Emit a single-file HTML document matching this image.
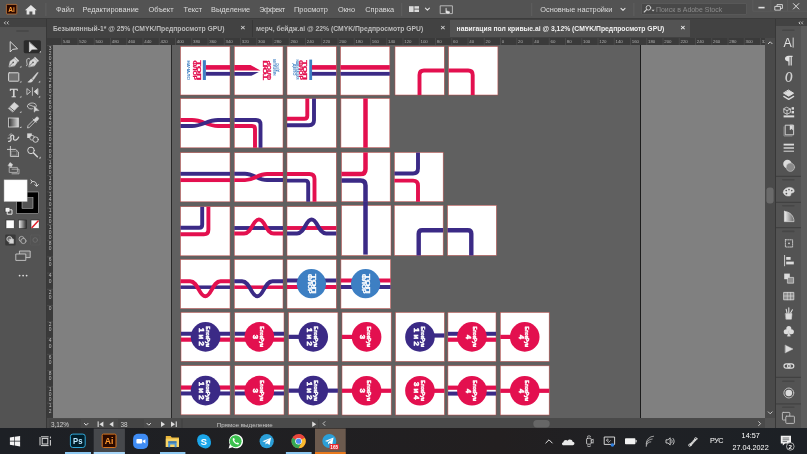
<!DOCTYPE html>
<html lang="ru">
<head>
<meta charset="utf-8">
<title>Adobe Illustrator</title>
<style>
*{box-sizing:border-box;margin:0;padding:0}
html,body{width:807px;height:454px;overflow:hidden;background:#535353;font-family:"Liberation Sans",sans-serif;}
#app{will-change:transform;position:relative;width:807px;height:454px;overflow:hidden;background:#535353}
.abs{position:absolute}
/* menu bar */
#menubar{left:0;top:0;width:807px;height:19px;background:#535353;border-bottom:1px solid #3c3c3c}
#menubar .mi{position:absolute;top:4.6px;font-size:7.4px;line-height:9px;color:#dcdcdc;white-space:nowrap}
/* tab bar */
#tabbar{left:47px;top:19px;width:728px;height:19px;background:#424242}
.tab{position:absolute;top:1px;height:17px;font-size:6.78px;font-weight:bold;line-height:17px;color:#bcbcbc;white-space:nowrap}
.tab.active{background:#535353;color:#f2f2f2}
.tabx{position:absolute;top:1px;font-size:8px;line-height:15px;color:#cfcfcf;font-weight:bold}
/* tools */
#tools{left:0;top:19px;width:46px;height:410px;background:#535353}
#toolshead{left:0;top:19px;width:46px;height:8px;background:#424242}
/* canvas */
#hruler{left:53px;top:38px;width:712px;height:7px;background:#3a3a3a}
#vruler{left:47px;top:38px;width:6px;height:380px;background:#3a3a3a}
#canvas{left:53px;top:45px;width:712px;height:373px;background:#606060;overflow:hidden}
/* right */
#vscroll{left:765px;top:38px;width:10px;height:380px;background:#4a4a4a}
#rpanel{left:776px;top:19px;width:25px;height:410px;background:#535353}
#rstrip{left:801px;top:26px;width:6px;height:403px;background:#5c5c5c}
#status{left:47px;top:418px;width:728px;height:11px;background:#4a4a4a}
#status span{position:absolute;top:2.9px;font-size:6.4px;line-height:7px;color:#d0d0d0;white-space:nowrap}
/* taskbar */
#taskbar{left:0;top:429px;width:807px;height:25px;background:#1e2126}
#taskbar .tt{position:absolute;color:#fff;white-space:nowrap}
svg{position:absolute;left:0;top:0;overflow:visible}
svg text{font-family:"Liberation Sans",sans-serif}
</style>
</head>
<body>
<div id="app">

<!-- ================= MENU BAR ================= -->
<div id="menubar" class="abs">
  <span class="mi" style="left:56px">Файл</span>
  <span class="mi" style="left:82.6px">Редактирование</span>
  <span class="mi" style="left:148.4px">Объект</span>
  <span class="mi" style="left:183.6px">Текст</span>
  <span class="mi" style="left:211px">Выделение</span>
  <span class="mi" style="left:259.3px;letter-spacing:-.5px">Эффект</span>
  <span class="mi" style="left:294px">Просмотр</span>
  <span class="mi" style="left:337.9px">Окно</span>
  <span class="mi" style="left:365.2px">Справка</span>
  <span class="mi" style="left:540.2px">Основные настройки</span>
  <div class="abs" style="left:640.5px;top:3px;width:106px;height:11.5px;background:#484848;border:1px solid #585858;border-radius:1px"></div>
  <span class="mi" style="left:656px;color:#8c8c8c;font-size:6.95px">Поиск в Adobe Stock</span>
</div>

<!-- ================= TAB BAR ================= -->
<div id="tabbar" class="abs">
  <div class="tab" style="left:5.9px">Безымянный-1* @ 25% (CMYK/Предпросмотр GPU)</div>
  <div class="tabx" style="left:193.5px">×</div>
  <div class="tab" style="left:209px">мерч, бейдж.ai @ 22% (CMYK/Предпросмотр GPU)</div>
  <div class="tabx" style="left:393.5px">×</div>
  <div class="abs tabsep" style="left:204.6px;top:1px;width:1px;height:17px;background:#383838"></div>
  <div class="tab active" style="left:403px;width:240px;padding-left:6.6px">навигация пол кривые.ai @ 3,12% (CMYK/Предпросмотр GPU)</div>
  <div class="tabx" style="left:633.5px;color:#f0f0f0">×</div>
</div>

<!-- ================= TOOLS ================= -->
<div id="tools" class="abs"></div>
<div id="toolshead" class="abs"></div>
<div class="abs" style="left:0;top:19px;width:46px;height:410px"><svg width="46" height="435" viewBox="0 19 46 435">
  <!-- header chevrons -->
  <path d="M5.8 21.4 L4.3 22.9 L5.8 24.4 M8.6 21.4 L7.1 22.9 L8.6 24.4" stroke="#d4d4d4" stroke-width=".9" fill="none"/>
  <!-- grip -->
  <rect x="16" y="30.2" width="13" height="1.6" rx=".8" fill="#474747"/>
  <g fill="none" stroke="#d6d6d6" stroke-width="1" stroke-linejoin="round" stroke-linecap="round">
    <!-- selection tool (outline) -->
    <path d="M10.2 42 L10.2 52 L12.6 49.4 L17.2 48.8 Z" />
    <!-- active bg + direct selection -->
    <rect x="23.7" y="40.2" width="17.2" height="13" rx="1.6" fill="#2b2b2b" stroke="none"/>
    <path d="M29.4 42.4 L29.4 52 L32 49.2 L36.9 49.2 Z" fill="#e2e2e2" stroke="#e2e2e2" stroke-width=".6"/>
    <!-- pen -->
    <path d="M9 66.6 L10.2 61.2 L14.2 58.6 L17.4 61.8 L14.8 65.6 Z" fill="#d6d6d6" stroke-width=".6"/>
    <path d="M14.6 57.4 L18.6 61.4" stroke-width="1.6" stroke-linecap="butt"/>
    <path d="M9.4 66.2 L12.8 62.8" stroke="#535353" stroke-width=".7"/>
    <circle cx="13.2" cy="62.4" r=".8" fill="#535353" stroke="none"/>
    <!-- curvature pen -->
    <path d="M28.8 66.6 L30 61.2 L34 58.6 L37.2 61.8 L34.6 65.6 Z" fill="#d6d6d6" stroke-width=".6"/>
    <path d="M34.4 57.4 L38.4 61.4" stroke-width="1.6" stroke-linecap="butt"/>
    <path d="M29.2 66.2 L32.6 62.8" stroke="#535353" stroke-width=".7"/>
    <circle cx="33" cy="62.4" r=".8" fill="#535353" stroke="none"/>
    <path d="M26.4 65.8 C28.6 65.2 25.8 61.6 27 59.4 C27.6 58.4 28.8 58 29.6 58.8" stroke-width=".9"/>
    <!-- rectangle -->
    <rect x="8.6" y="72.8" width="10.2" height="8.4" rx=".6" fill="#6f6f6f"/>
    <!-- brush -->
    <path d="M37.4 72.4 L32.2 78.4 L33.6 79.6 L38 73 Z" fill="#d6d6d6" stroke-width=".5"/>
    <path d="M31.6 79 C29.6 79 30 81.4 27.8 82 C30.4 82.8 33 81.6 33 80.2 Z" fill="#d6d6d6" stroke-width=".5"/>
    <!-- reflect -->
    <path d="M32.4 87.6 V95.4" stroke-width=".8"/>
    <path d="M27.2 88.8 L30.6 91.6 L27.2 94.4 Z" stroke-width=".8"/>
    <path d="M37.6 88.8 L34.2 91.6 L37.6 94.4 Z" fill="#d6d6d6" stroke-width=".8"/>
    <!-- eraser -->
    <path d="M8.6 108.2 L14.2 102.4 L18.6 106 L13 111.8 Z" fill="#d6d6d6" stroke-width=".6"/>
    <path d="M9.6 107.2 L14 110.8" stroke="#535353" stroke-width=".9"/>
    <!-- shape builder (lasso-ish) -->
    <path d="M27.4 106.4 C27 102.8 34 101.8 36 104.6 C36.8 106 36 107.4 34.6 107.8 M27.4 106.4 C27.8 108.8 31 109.4 32.4 108.8 M28.6 104.6 L33.4 106.4" stroke-width=".8"/>
    <path d="M34.2 106.2 L34.2 112.2 L35.8 110.6 L38.6 110.6 Z" fill="#d6d6d6" stroke-width=".5"/>
    <!-- eyedropper -->
    <path d="M27.6 127.6 L28 125.6 L33.4 120.2 L35 121.8 L29.6 127.2 Z" stroke-width=".8"/>
    <path d="M33 119 L36.2 122.2 M34 120 L36 117.6 C36.6 117 37.8 117 38.2 117.6 C38.8 118.2 38.6 119.2 38 119.8 L35.6 121.8" fill="#d6d6d6" stroke-width=".8"/>
    <!-- symbol sprayer / puppet -->
    <path d="M8.6 141.4 C10.8 141.6 11.6 139.4 10.8 137.6 C10 135.8 12.6 134 13.6 136 C14.4 137.6 12.8 138.4 13.8 139.6 C15 141 17.4 139.6 18.6 137.2" stroke-width="1.3"/>
    <path d="M9.4 135.2 L11 133.6 M8 138.2 L9.6 138" stroke-width=".8"/>
    <!-- blend -->
    <rect x="27.2" y="133.4" width="4.6" height="4.6" fill="#d6d6d6" stroke="none"/>
    <circle cx="32.2" cy="137.8" r="2.4" stroke-width=".8" fill="#535353"/>
    <circle cx="35.6" cy="139.6" r="2.7" stroke-width=".9" fill="#535353"/>
    <!-- artboard -->
    <path d="M10.4 146.4 V156.4 H18.4 M7.4 149.4 H15.6 L18.4 152 V156.4" stroke-width=".9"/>
    <path d="M11.6 151.2 H16.8 V155.2 H11.6 Z" stroke-width=".5" stroke="#a8a8a8"/>
    <!-- zoom -->
    <circle cx="31" cy="150.4" r="3.3" stroke-width="1"/>
    <path d="M33.6 153 L37.4 156.8" stroke-width="1.5"/>
    <!-- slice/hand-ish -->
    <path d="M9.6 167.4 H17.4 V172.4 H9.6 Z M12 169.2 H19 V173.8 H12" stroke-width=".8" stroke="#bdbdbd"/>
    <path d="M8.2 165.4 L10 162.6 L12.6 164.4 L11.4 167 Z" fill="#d6d6d6" stroke-width=".5"/>
    <!-- swap arrows -->
    <path d="M32 181.6 C35 181 36.8 182.6 36.6 185.6 M34.8 184.6 L36.6 186.4 L38.4 184.6 M31 183.2 L32.4 181.4 L30.8 180" stroke-width="1"/>
    <!-- default fill/stroke mini -->
    <rect x="5.4" y="207.6" width="4.4" height="4.4" fill="#fff" stroke="#2a2a2a" stroke-width=".5"/>
    <rect x="7.6" y="209.8" width="4.4" height="4.4" fill="none" stroke="#e8e8e8" stroke-width="1"/>
    <!-- screen mode -->
    <rect x="19.8" y="251" width="10.4" height="6.6" fill="#6a6a6a" stroke-width=".8"/>
    <rect x="16.2" y="254" width="9.6" height="6.4" fill="#535353" stroke-width=".8"/>
    <!-- draw modes -->
    <rect x="5.2" y="234.6" width="10.4" height="10.8" rx="1" fill="#3a3a3a" stroke="none"/>
    <circle cx="9.4" cy="239" r="2.6" fill="#6a6a6a" stroke-width=".8"/>
    <rect x="9.4" y="239.2" width="4.2" height="4.2" fill="#d6d6d6" stroke-width=".4"/>
    <circle cx="21.6" cy="239" r="2.6" stroke-width=".8" stroke="#bdbdbd"/>
    <circle cx="23.4" cy="241" r="2.6" stroke-width=".8" stroke="#bdbdbd" fill="#535353"/>
    <rect x="30.4" y="235" width="9.6" height="10" rx="1" stroke="#5d5d5d" stroke-width=".6"/>
    <circle cx="35.2" cy="240" r="2.3" stroke="#6e6e6e" stroke-width=".8"/>
  </g>
  <!-- tiny flyout triangles -->
  <g fill="#d6d6d6">
    <path d="M41 52.6 L41 50.8 L39.2 52.6 Z"/>
    <path d="M21.4 67.6 L21.4 65.8 L19.6 67.6 Z"/>
    <path d="M21.4 82.6 L21.4 80.8 L19.6 82.6 Z"/><path d="M40.2 82.6 L40.2 80.8 L38.4 82.6 Z"/>
    <path d="M21.4 97.6 L21.4 95.8 L19.6 97.6 Z"/><path d="M40.2 97.6 L40.2 95.8 L38.4 97.6 Z"/>
    <path d="M21.4 112.8 L21.4 111 L19.6 112.8 Z"/>
    <path d="M21.4 128 L21.4 126.2 L19.6 128 Z"/>
    <path d="M40.6 158.4 L40.6 156.6 L38.8 158.4 Z"/>
  </g>
  <!-- Type tool glyph -->
  <text x="13.7" y="96.8" style="font-family:'Liberation Serif',serif" font-size="13" fill="#dcdcdc" stroke="#dcdcdc" stroke-width=".3" text-anchor="middle">T</text>
  <!-- gradient tool -->
  <defs>
    <linearGradient id="gt" x1="0" x2="1" y1="0" y2="0"><stop offset="0" stop-color="#2e2e2e"/><stop offset="1" stop-color="#d8d8d8"/></linearGradient>
    <linearGradient id="gm" x1="0" x2="1" y1="0" y2="0"><stop offset="0" stop-color="#f4f4f4"/><stop offset="1" stop-color="#2a2a2a"/></linearGradient>
  </defs>
  <rect x="8.4" y="118" width="10" height="9" fill="url(#gt)" stroke="#d6d6d6" stroke-width=".8"/>
  <!-- fill / stroke -->
  <rect x="16.4" y="192" width="22.2" height="21.6" fill="#000" stroke="#d0d0d0" stroke-width=".5"/>
  <rect x="22" y="197.7" width="11" height="10.6" fill="#535353" stroke="#d0d0d0" stroke-width=".5"/>
  <rect x="4" y="179.8" width="23.2" height="21.9" fill="#fff" stroke="#9a9a9a" stroke-width=".5"/>
  <!-- color / gradient / none -->
  <rect x="6" y="220" width="8.2" height="8.6" fill="#fff" stroke="#2a2a2a" stroke-width=".6"/>
  <rect x="18.5" y="220" width="8" height="8.6" fill="url(#gm)" stroke="#2a2a2a" stroke-width=".6"/>
  <rect x="31" y="220" width="8.2" height="8.6" fill="#fff" stroke="#2a2a2a" stroke-width=".6"/>
  <path d="M31.6 228 L38.6 220.6" stroke="#e0202a" stroke-width="1.5"/>
  <!-- dots -->
  <circle cx="19.6" cy="275.6" r=".9" fill="#e0e0e0"/><circle cx="23.1" cy="275.6" r=".9" fill="#e0e0e0"/><circle cx="26.6" cy="275.6" r=".9" fill="#e0e0e0"/>
</svg>
</div>
<div class="abs" style="left:46px;top:19px;width:1px;height:410px;background:#383838"></div>

<!-- ================= CANVAS ================= -->
<div id="canvas" class="abs">
  <div class="abs" style="left:0;top:0;width:117.5px;height:373px;background:#808080"></div>
  <div class="abs" style="left:117.5px;top:0;width:1.2px;height:373px;background:#2a2a2a"></div>
  <div class="abs" style="left:587px;top:0;width:1.2px;height:373px;background:#1c1c1c"></div>
  <div class="abs" style="left:588.2px;top:0;width:124px;height:373px;background:#808080"></div>
  <svg width="712" height="373" viewBox="53 45 712 373">
<rect x="180.5" y="46.5" width="49.5" height="48.5" fill="#fff" stroke="#c04a48" stroke-width=".6" stroke-opacity=".85"/>
<text transform="translate(187.2,70.2) rotate(90)" fill="#3d7fc3" font-size="4.3" font-weight="bold" text-anchor="middle" textLength="19.6" lengthAdjust="spacingAndGlyphs">НАЧАЛО</text>
<text transform="translate(196.6,70.2) rotate(90)" fill="#e3104f" font-size="5.4" font-weight="bold" text-anchor="middle" textLength="19.6" lengthAdjust="spacingAndGlyphs" stroke="#e3104f" stroke-width="0.3">ТОП</text>
<text transform="translate(192.7,70.2) rotate(90)" fill="#e3104f" font-size="5.4" font-weight="bold" text-anchor="middle" textLength="19.6" lengthAdjust="spacingAndGlyphs" stroke="#e3104f" stroke-width="0.3">ФЛОР</text>
<rect x="202.8" y="60.2" width="3.1" height="19.8" fill="#3d7fc3"/>
<rect x="205.9" y="65.10" width="24.10" height="4.6" fill="#e3104f"/>
<rect x="205.9" y="71.90" width="24.10" height="3.8" fill="#3b2a86"/>
<rect x="234.3" y="46.5" width="48.7" height="48.5" fill="#fff" stroke="#c04a48" stroke-width=".6" stroke-opacity=".85"/>
<path d="M234.3,65.1 H250.5 L260.5,70.4 L234.3,70.4 Z" fill="#e3104f"/>
<path d="M234.3,71.9 H258.8 L251.4,75.8 H234.3 Z" fill="#3b2a86"/>
<text transform="translate(266.6,70.3) rotate(-90)" fill="#e3104f" font-size="5.4" font-weight="bold" text-anchor="middle" textLength="19.6" lengthAdjust="spacingAndGlyphs" stroke="#e3104f" stroke-width="0.3">ТОП</text>
<text transform="translate(270.6,70.3) rotate(-90)" fill="#e3104f" font-size="5.4" font-weight="bold" text-anchor="middle" textLength="19.6" lengthAdjust="spacingAndGlyphs" stroke="#e3104f" stroke-width="0.3">ФЛОР</text>
<text transform="translate(275.8,67.5) rotate(-90)" fill="#3d7fc3" font-size="2.9" font-weight="bold" text-anchor="middle" textLength="16" lengthAdjust="spacingAndGlyphs">НАВИГАЦИЯ</text>
<text transform="translate(278.6,67.5) rotate(-90)" fill="#3d7fc3" font-size="2.9" font-weight="bold" text-anchor="middle" >ДЕПО</text>
<rect x="287" y="46.5" width="49.3" height="48.5" fill="#fff" stroke="#c04a48" stroke-width=".6" stroke-opacity=".85"/>
<text transform="translate(296.0,69.5) rotate(90)" fill="#3d7fc3" font-size="2.9" font-weight="bold" text-anchor="middle" textLength="20" lengthAdjust="spacingAndGlyphs">НАВИГАЦИЯ</text>
<text transform="translate(293.2,69.5) rotate(90)" fill="#3d7fc3" font-size="2.9" font-weight="bold" text-anchor="middle" textLength="12" lengthAdjust="spacingAndGlyphs">ДЕПО</text>
<text transform="translate(302.9,70) rotate(90)" fill="#e3104f" font-size="5.4" font-weight="bold" text-anchor="middle" textLength="19.6" lengthAdjust="spacingAndGlyphs" stroke="#e3104f" stroke-width="0.3">ТОП</text>
<text transform="translate(298.9,70) rotate(90)" fill="#e3104f" font-size="5.4" font-weight="bold" text-anchor="middle" textLength="19.6" lengthAdjust="spacingAndGlyphs" stroke="#e3104f" stroke-width="0.3">ФЛОР</text>
<rect x="309.3" y="59.6" width="2.8" height="20.4" fill="#3d7fc3"/>
<rect x="312" y="65.10" width="24.30" height="4.6" fill="#e3104f"/>
<rect x="312" y="71.90" width="24.30" height="3.8" fill="#3b2a86"/>
<rect x="340.5" y="46.5" width="49.3" height="48.6" fill="#fff" stroke="#c04a48" stroke-width=".6" stroke-opacity=".85"/>
<rect x="340.5" y="65.10" width="49.30" height="4.6" fill="#e3104f"/>
<rect x="340.5" y="71.90" width="49.30" height="3.8" fill="#3b2a86"/>
<rect x="395" y="46.5" width="49.3" height="48.5" fill="#fff" stroke="#c04a48" stroke-width=".6" stroke-opacity=".85"/>
<path d="M419.5,95 V75 Q419.5,70.5 424,70.5 H444.3" stroke="#e3104f" stroke-width="3.9" fill="none"/>
<rect x="448.6" y="46.5" width="49.3" height="48.5" fill="#fff" stroke="#c04a48" stroke-width=".6" stroke-opacity=".85"/>
<path d="M448.6,70.5 H468.2 Q472.7,70.5 472.7,75 V95" stroke="#e3104f" stroke-width="3.9" fill="none"/>
<rect x="180.5" y="98.6" width="49.5" height="49.2" fill="#fff" stroke="#c04a48" stroke-width=".6" stroke-opacity=".85"/>
<path d="M180.5,120 H192 C203,120 207,126 218,126 H230" stroke="#e3104f" stroke-width="3.9" fill="none"/>
<path d="M180.5,126 H192 C203,126 207,120 218,120 H230" stroke="#3b2a86" stroke-width="3.9" fill="none"/>
<rect x="234.3" y="98.6" width="48.7" height="49.2" fill="#fff" stroke="#c04a48" stroke-width=".6" stroke-opacity=".85"/>
<path d="M234.3,126 H252 Q255,126 255,129 V147.8" stroke="#e3104f" stroke-width="3.9" fill="none"/>
<path d="M234.3,120 H256 Q260.5,120 260.5,124.5 V147.8" stroke="#3b2a86" stroke-width="3.9" fill="none"/>
<rect x="287" y="98.6" width="49.3" height="49.2" fill="#fff" stroke="#c04a48" stroke-width=".6" stroke-opacity=".85"/>
<path d="M307.3,98.6 V115.8 Q307.3,118.8 304.3,118.8 H287" stroke="#e3104f" stroke-width="3.9" fill="none"/>
<path d="M314,98.6 V120.3 Q314,125.3 309,125.3 H287" stroke="#3b2a86" stroke-width="3.9" fill="none"/>
<rect x="340.9" y="98.4" width="48.9" height="49.3" fill="#fff" stroke="#c04a48" stroke-width=".6" stroke-opacity=".85"/>
<path d="M365.5,98.4 V147.7" stroke="#e3104f" stroke-width="4.5" fill="none"/>
<rect x="180.5" y="152.7" width="49.5" height="49.1" fill="#fff" stroke="#c04a48" stroke-width=".6" stroke-opacity=".85"/>
<rect x="180.5" y="171.85" width="49.50" height="3.9" fill="#3b2a86"/>
<rect x="180.5" y="178.15" width="49.50" height="3.9" fill="#e3104f"/>
<rect x="234.3" y="152.7" width="48.7" height="49.1" fill="#fff" stroke="#c04a48" stroke-width=".6" stroke-opacity=".85"/>
<path d="M234.3,173.8 H245 C254,173.8 258,180 267,180 H283" stroke="#3b2a86" stroke-width="3.9" fill="none"/>
<path d="M234.3,180.1 H245 C254,180.1 258,174 267,174 H283" stroke="#e3104f" stroke-width="3.9" fill="none"/>
<rect x="287" y="152.7" width="49.3" height="49.1" fill="#fff" stroke="#c04a48" stroke-width=".6" stroke-opacity=".85"/>
<path d="M287,180.6 H305.2 Q308.2,180.6 308.2,183.6 V201.8" stroke="#3b2a86" stroke-width="3.9" fill="none"/>
<path d="M287,174 H309.5 Q314.5,174 314.5,179 V201.8" stroke="#e3104f" stroke-width="3.9" fill="none"/>
<rect x="341.5" y="152.4" width="48.7" height="49.3" fill="#fff" stroke="#c04a48" stroke-width=".6" stroke-opacity=".85"/>
<path d="M365.5,152.4 V169 Q365.5,174.1 360.4,174.1 H341.5" stroke="#e3104f" stroke-width="4.5" fill="none"/>
<path d="M341.5,180.5 H360.5 Q365.5,180.5 365.5,185.5 V201.7" stroke="#3b2a86" stroke-width="4.5" fill="none"/>
<rect x="394.4" y="152.4" width="48.8" height="49.3" fill="#fff" stroke="#c04a48" stroke-width=".6" stroke-opacity=".85"/>
<path d="M418,152.4 V168.5 Q418,173.5 413,173.5 H394.4" stroke="#3b2a86" stroke-width="3.9" fill="none"/>
<path d="M394.4,180.6 H413 Q418,180.6 418,185.6 V201.7" stroke="#e3104f" stroke-width="3.9" fill="none"/>
<rect x="180.5" y="206.7" width="49.5" height="49.1" fill="#fff" stroke="#c04a48" stroke-width=".6" stroke-opacity=".85"/>
<path d="M202.2,206.7 V224.8 Q202.2,227.8 199.2,227.8 H180.5" stroke="#3b2a86" stroke-width="3.9" fill="none"/>
<path d="M208.4,206.7 V229.8 Q208.4,234.3 203.9,234.3 H180.5" stroke="#e3104f" stroke-width="3.9" fill="none"/>
<rect x="234.3" y="206.7" width="48.7" height="49.1" fill="#fff" stroke="#c04a48" stroke-width=".6" stroke-opacity=".85"/>
<rect x="234.3" y="226.05" width="48.70" height="3.9" fill="#3b2a86"/>
<path d="M234.3,233.5 H244 C252,233.5 252.5,219.5 258.9,219.5 C265.3,219.5 265.8,233.5 273.8,233.5 H283" stroke="#e3104f" stroke-width="3.9" fill="none"/>
<rect x="287" y="206.7" width="49.3" height="49.1" fill="#fff" stroke="#c04a48" stroke-width=".6" stroke-opacity=".85"/>
<rect x="287" y="226.05" width="49.30" height="3.9" fill="#e3104f"/>
<path d="M287,233.5 H297 C305,233.5 305.5,219.5 311.6,219.5 C317.7,219.5 318.2,233.5 326.2,233.5 H336.3" stroke="#3b2a86" stroke-width="3.9" fill="none"/>
<rect x="341.5" y="205.4" width="49.5" height="50.2" fill="#fff" stroke="#c04a48" stroke-width=".6" stroke-opacity=".85"/>
<path d="M365.5,201.4 V254.6" stroke="#3b2a86" stroke-width="4.5" fill="none"/>
<rect x="394.3" y="205.3" width="48.9" height="50.1" fill="#fff" stroke="#c04a48" stroke-width=".6" stroke-opacity=".85"/>
<path d="M418.7,255.4 V233.7 Q418.7,230.2 422.2,230.2 H443.2" stroke="#3b2a86" stroke-width="4.4" fill="none"/>
<rect x="447.5" y="205.3" width="48.9" height="50.1" fill="#fff" stroke="#c04a48" stroke-width=".6" stroke-opacity=".85"/>
<path d="M447.5,230.2 H467.8 Q471.3,230.2 471.3,233.7 V255.4" stroke="#3b2a86" stroke-width="4.4" fill="none"/>
<rect x="180.5" y="259.5" width="49.5" height="49.0" fill="#fff" stroke="#c04a48" stroke-width=".6" stroke-opacity=".85"/>
<rect x="180.5" y="285.45" width="49.50" height="3.5" fill="#3b2a86"/>
<path d="M180.5,281.2 H190 C198,281.2 199,296.3 205.3,296.3 C211.6,296.3 212.6,281.2 220.6,281.2 H230" stroke="#e3104f" stroke-width="3.9" fill="none"/>
<rect x="234.3" y="259.5" width="48.7" height="49.0" fill="#fff" stroke="#c04a48" stroke-width=".6" stroke-opacity=".85"/>
<rect x="234.3" y="285.45" width="48.70" height="3.5" fill="#e3104f"/>
<path d="M234.3,281.2 H242 C250,281.2 251,296.3 257.3,296.3 C263.6,296.3 264.6,281.2 272.6,281.2 H283" stroke="#3b2a86" stroke-width="3.9" fill="none"/>
<rect x="287" y="259.5" width="49.3" height="49.0" fill="#fff" stroke="#c04a48" stroke-width=".6" stroke-opacity=".85"/>
<rect x="287" y="278.50" width="49.30" height="4" fill="#3b2a86"/>
<rect x="287" y="285.00" width="49.30" height="4" fill="#e3104f"/>
<circle cx="311.4" cy="283.7" r="14.6" fill="#3d7fc3"/>
<text transform="translate(311.8,283.7) rotate(90)" fill="#fff" font-size="5.2" font-weight="bold" text-anchor="middle" textLength="19.6" lengthAdjust="spacingAndGlyphs" stroke="#fff" stroke-width="0.3">ТОП</text>
<text transform="translate(308.0,283.7) rotate(90)" fill="#fff" font-size="5.2" font-weight="bold" text-anchor="middle" textLength="19.6" lengthAdjust="spacingAndGlyphs" stroke="#fff" stroke-width="0.3">ФЛОР</text>
<rect x="340.9" y="259.4" width="49.7" height="49.2" fill="#fff" stroke="#c04a48" stroke-width=".6" stroke-opacity=".85"/>
<rect x="340.9" y="278.50" width="49.70" height="4" fill="#e3104f"/>
<rect x="340.9" y="285.00" width="49.70" height="4" fill="#3b2a86"/>
<circle cx="365.6" cy="283.7" r="14.6" fill="#3d7fc3"/>
<text transform="translate(366.0,283.7) rotate(90)" fill="#fff" font-size="5.2" font-weight="bold" text-anchor="middle" textLength="19.6" lengthAdjust="spacingAndGlyphs" stroke="#fff" stroke-width="0.3">ТОП</text>
<text transform="translate(362.2,283.7) rotate(90)" fill="#fff" font-size="5.2" font-weight="bold" text-anchor="middle" textLength="19.6" lengthAdjust="spacingAndGlyphs" stroke="#fff" stroke-width="0.3">ФЛОР</text>
<rect x="181.0" y="312.4" width="49.1" height="48.9" fill="#fff" stroke="#c04a48" stroke-width=".6" stroke-opacity=".85"/>
<rect x="181.0" y="331.75" width="49.10" height="4.0" fill="#3b2a86"/>
<rect x="181.0" y="337.55" width="49.10" height="4.2" fill="#e3104f"/>
<circle cx="205.55" cy="336.85" r="14.8" fill="#3b2a86"/>
<text transform="translate(206.25,336.85) rotate(90)" fill="#fff" font-size="6.0" font-weight="bold" text-anchor="middle" textLength="21" lengthAdjust="spacingAndGlyphs" stroke="#fff" stroke-width=".4">БлокРум</text>
<text transform="translate(199.35000000000002,336.85) rotate(90)" fill="#fff" font-size="7.8" font-weight="bold" text-anchor="middle" stroke="#fff" stroke-width=".5">1 и 2</text>
<rect x="234.7" y="312.4" width="49.3" height="48.9" fill="#fff" stroke="#c04a48" stroke-width=".6" stroke-opacity=".85"/>
<rect x="234.7" y="331.75" width="49.30" height="4.0" fill="#3b2a86"/>
<rect x="234.7" y="337.55" width="49.30" height="4.2" fill="#e3104f"/>
<circle cx="259.35" cy="336.85" r="14.8" fill="#e3104f"/>
<text transform="translate(260.05,336.85) rotate(90)" fill="#fff" font-size="6.0" font-weight="bold" text-anchor="middle" textLength="21" lengthAdjust="spacingAndGlyphs" stroke="#fff" stroke-width=".4">БлокРум</text>
<text transform="translate(253.15000000000003,336.85) rotate(90)" fill="#fff" font-size="7.8" font-weight="bold" text-anchor="middle" stroke="#fff" stroke-width=".5">3</text>
<rect x="288.6" y="312.4" width="49.3" height="48.9" fill="#fff" stroke="#c04a48" stroke-width=".6" stroke-opacity=".85"/>
<rect x="288.6" y="334.75" width="24.65" height="4.2" fill="#3b2a86"/>
<circle cx="313.25" cy="336.85" r="14.8" fill="#3b2a86"/>
<text transform="translate(313.95,336.85) rotate(90)" fill="#fff" font-size="6.0" font-weight="bold" text-anchor="middle" textLength="21" lengthAdjust="spacingAndGlyphs" stroke="#fff" stroke-width=".4">БлокРум</text>
<text transform="translate(307.05,336.85) rotate(90)" fill="#fff" font-size="7.8" font-weight="bold" text-anchor="middle" stroke="#fff" stroke-width=".5">1 и 2</text>
<rect x="342.0" y="312.4" width="49.2" height="49.0" fill="#fff" stroke="#c04a48" stroke-width=".6" stroke-opacity=".85"/>
<rect x="342.0" y="334.80" width="24.60" height="4.2" fill="#e3104f"/>
<circle cx="366.6" cy="336.9" r="14.8" fill="#e3104f"/>
<text transform="translate(367.3,336.9) rotate(90)" fill="#fff" font-size="6.0" font-weight="bold" text-anchor="middle" textLength="21" lengthAdjust="spacingAndGlyphs" stroke="#fff" stroke-width=".4">БлокРум</text>
<text transform="translate(360.40000000000003,336.9) rotate(90)" fill="#fff" font-size="7.8" font-weight="bold" text-anchor="middle" stroke="#fff" stroke-width=".5">3</text>
<rect x="395.5" y="312.4" width="48.9" height="49.0" fill="#fff" stroke="#c04a48" stroke-width=".6" stroke-opacity=".85"/>
<rect x="419.95" y="333.40" width="24.45" height="4.2" fill="#3b2a86"/>
<circle cx="419.95" cy="336.9" r="14.8" fill="#3b2a86"/>
<text transform="translate(420.65,336.9) rotate(90)" fill="#fff" font-size="6.0" font-weight="bold" text-anchor="middle" textLength="21" lengthAdjust="spacingAndGlyphs" stroke="#fff" stroke-width=".4">БлокРум</text>
<text transform="translate(413.75,336.9) rotate(90)" fill="#fff" font-size="7.8" font-weight="bold" text-anchor="middle" stroke="#fff" stroke-width=".5">1 и 2</text>
<rect x="447.9" y="312.4" width="48.1" height="49.0" fill="#fff" stroke="#c04a48" stroke-width=".6" stroke-opacity=".85"/>
<rect x="447.9" y="331.80" width="48.10" height="4.0" fill="#3b2a86"/>
<rect x="447.9" y="337.60" width="48.10" height="4.2" fill="#e3104f"/>
<circle cx="471.95" cy="336.9" r="14.8" fill="#e3104f"/>
<text transform="translate(472.65,336.9) rotate(90)" fill="#fff" font-size="6.0" font-weight="bold" text-anchor="middle" textLength="21" lengthAdjust="spacingAndGlyphs" stroke="#fff" stroke-width=".4">БлокРум</text>
<text transform="translate(465.75,336.9) rotate(90)" fill="#fff" font-size="7.8" font-weight="bold" text-anchor="middle" stroke="#fff" stroke-width=".5">4</text>
<rect x="500.3" y="312.4" width="48.9" height="49.0" fill="#fff" stroke="#c04a48" stroke-width=".6" stroke-opacity=".85"/>
<rect x="500.3" y="334.80" width="24.45" height="4.2" fill="#e3104f"/>
<circle cx="524.75" cy="336.9" r="14.8" fill="#e3104f"/>
<text transform="translate(525.45,336.9) rotate(90)" fill="#fff" font-size="6.0" font-weight="bold" text-anchor="middle" textLength="21" lengthAdjust="spacingAndGlyphs" stroke="#fff" stroke-width=".4">БлокРум</text>
<text transform="translate(518.55,336.9) rotate(90)" fill="#fff" font-size="7.8" font-weight="bold" text-anchor="middle" stroke="#fff" stroke-width=".5">4</text>
<rect x="181.0" y="365.7" width="49.1" height="49.1" fill="#fff" stroke="#c04a48" stroke-width=".6" stroke-opacity=".85"/>
<rect x="181.0" y="385.45" width="49.10" height="4.2" fill="#e3104f"/>
<rect x="181.0" y="391.45" width="49.10" height="4.0" fill="#3b2a86"/>
<circle cx="205.55" cy="390.65" r="14.8" fill="#3b2a86"/>
<text transform="translate(206.25,390.65) rotate(90)" fill="#fff" font-size="6.0" font-weight="bold" text-anchor="middle" textLength="21" lengthAdjust="spacingAndGlyphs" stroke="#fff" stroke-width=".4">БлокРум</text>
<text transform="translate(199.35000000000002,390.65) rotate(90)" fill="#fff" font-size="7.8" font-weight="bold" text-anchor="middle" stroke="#fff" stroke-width=".5">1 и 2</text>
<rect x="234.7" y="365.7" width="49.3" height="49.1" fill="#fff" stroke="#c04a48" stroke-width=".6" stroke-opacity=".85"/>
<rect x="234.7" y="385.45" width="49.30" height="4.2" fill="#e3104f"/>
<rect x="234.7" y="391.45" width="49.30" height="4.0" fill="#3b2a86"/>
<circle cx="259.35" cy="390.65" r="14.8" fill="#e3104f"/>
<text transform="translate(260.05,390.65) rotate(90)" fill="#fff" font-size="6.0" font-weight="bold" text-anchor="middle" textLength="21" lengthAdjust="spacingAndGlyphs" stroke="#fff" stroke-width=".4">БлокРум</text>
<text transform="translate(253.15000000000003,390.65) rotate(90)" fill="#fff" font-size="7.8" font-weight="bold" text-anchor="middle" stroke="#fff" stroke-width=".5">3</text>
<rect x="288.6" y="365.7" width="49.3" height="49.1" fill="#fff" stroke="#c04a48" stroke-width=".6" stroke-opacity=".85"/>
<rect x="288.6" y="388.55" width="49.30" height="4.2" fill="#3b2a86"/>
<circle cx="313.25" cy="390.65" r="14.8" fill="#3b2a86"/>
<text transform="translate(313.95,390.65) rotate(90)" fill="#fff" font-size="6.0" font-weight="bold" text-anchor="middle" textLength="21" lengthAdjust="spacingAndGlyphs" stroke="#fff" stroke-width=".4">БлокРум</text>
<text transform="translate(307.05,390.65) rotate(90)" fill="#fff" font-size="7.8" font-weight="bold" text-anchor="middle" stroke="#fff" stroke-width=".5">1 и 2</text>
<rect x="342.0" y="365.7" width="49.2" height="49.3" fill="#fff" stroke="#c04a48" stroke-width=".6" stroke-opacity=".85"/>
<rect x="342.0" y="388.65" width="49.20" height="4.2" fill="#e3104f"/>
<circle cx="366.6" cy="390.75" r="14.8" fill="#e3104f"/>
<text transform="translate(367.3,390.75) rotate(90)" fill="#fff" font-size="6.0" font-weight="bold" text-anchor="middle" textLength="21" lengthAdjust="spacingAndGlyphs" stroke="#fff" stroke-width=".4">БлокРум</text>
<text transform="translate(360.40000000000003,390.75) rotate(90)" fill="#fff" font-size="7.8" font-weight="bold" text-anchor="middle" stroke="#fff" stroke-width=".5">3</text>
<rect x="395.5" y="365.8" width="48.9" height="49.2" fill="#fff" stroke="#c04a48" stroke-width=".6" stroke-opacity=".85"/>
<rect x="419.95" y="388.70" width="24.45" height="4.2" fill="#e3104f"/>
<circle cx="419.95" cy="390.79999999999995" r="14.8" fill="#e3104f"/>
<text transform="translate(420.65,390.79999999999995) rotate(90)" fill="#fff" font-size="6.0" font-weight="bold" text-anchor="middle" textLength="21" lengthAdjust="spacingAndGlyphs" stroke="#fff" stroke-width=".4">БлокРум</text>
<text transform="translate(413.75,390.79999999999995) rotate(90)" fill="#fff" font-size="7.8" font-weight="bold" text-anchor="middle" stroke="#fff" stroke-width=".5">3 и 4</text>
<rect x="447.9" y="365.8" width="48.1" height="49.2" fill="#fff" stroke="#c04a48" stroke-width=".6" stroke-opacity=".85"/>
<rect x="447.9" y="385.60" width="48.10" height="4.2" fill="#e3104f"/>
<rect x="447.9" y="391.60" width="48.10" height="4.0" fill="#3b2a86"/>
<circle cx="471.95" cy="390.79999999999995" r="14.8" fill="#e3104f"/>
<text transform="translate(472.65,390.79999999999995) rotate(90)" fill="#fff" font-size="6.0" font-weight="bold" text-anchor="middle" textLength="21" lengthAdjust="spacingAndGlyphs" stroke="#fff" stroke-width=".4">БлокРум</text>
<text transform="translate(465.75,390.79999999999995) rotate(90)" fill="#fff" font-size="7.8" font-weight="bold" text-anchor="middle" stroke="#fff" stroke-width=".5">4</text>
<rect x="500.3" y="365.8" width="48.9" height="49.2" fill="#fff" stroke="#c04a48" stroke-width=".6" stroke-opacity=".85"/>
<rect x="500.3" y="388.70" width="48.90" height="4.2" fill="#e3104f"/>
<circle cx="524.75" cy="390.79999999999995" r="14.8" fill="#e3104f"/>
<text transform="translate(525.45,390.79999999999995) rotate(90)" fill="#fff" font-size="6.0" font-weight="bold" text-anchor="middle" textLength="21" lengthAdjust="spacingAndGlyphs" stroke="#fff" stroke-width=".4">БлокРум</text>
<text transform="translate(518.55,390.79999999999995) rotate(90)" fill="#fff" font-size="7.8" font-weight="bold" text-anchor="middle" stroke="#fff" stroke-width=".5">4</text>
  </svg>
</div>
<div id="hruler" class="abs"></div>
<div id="vruler" class="abs"></div>
<svg width="807" height="454" viewBox="0 0 807 454" style="pointer-events:none">
<line x1="61.75" y1="38" x2="61.75" y2="45" stroke="#5a5a5a" stroke-width=".5"/>
<text x="62.95" y="43.3" font-size="4.4" fill="#b0b0b0">540</text>
<line x1="78.00" y1="38" x2="78.00" y2="45" stroke="#5a5a5a" stroke-width=".5"/>
<text x="79.20" y="43.3" font-size="4.4" fill="#b0b0b0">520</text>
<line x1="94.25" y1="38" x2="94.25" y2="45" stroke="#5a5a5a" stroke-width=".5"/>
<text x="95.45" y="43.3" font-size="4.4" fill="#b0b0b0">500</text>
<line x1="110.50" y1="38" x2="110.50" y2="45" stroke="#5a5a5a" stroke-width=".5"/>
<text x="111.70" y="43.3" font-size="4.4" fill="#b0b0b0">480</text>
<line x1="126.75" y1="38" x2="126.75" y2="45" stroke="#5a5a5a" stroke-width=".5"/>
<text x="127.95" y="43.3" font-size="4.4" fill="#b0b0b0">460</text>
<line x1="143.00" y1="38" x2="143.00" y2="45" stroke="#5a5a5a" stroke-width=".5"/>
<text x="144.20" y="43.3" font-size="4.4" fill="#b0b0b0">440</text>
<line x1="159.25" y1="38" x2="159.25" y2="45" stroke="#5a5a5a" stroke-width=".5"/>
<text x="160.45" y="43.3" font-size="4.4" fill="#b0b0b0">420</text>
<line x1="175.50" y1="38" x2="175.50" y2="45" stroke="#5a5a5a" stroke-width=".5"/>
<text x="176.70" y="43.3" font-size="4.4" fill="#b0b0b0">400</text>
<line x1="191.75" y1="38" x2="191.75" y2="45" stroke="#5a5a5a" stroke-width=".5"/>
<text x="192.95" y="43.3" font-size="4.4" fill="#b0b0b0">380</text>
<line x1="208.00" y1="38" x2="208.00" y2="45" stroke="#5a5a5a" stroke-width=".5"/>
<text x="209.20" y="43.3" font-size="4.4" fill="#b0b0b0">360</text>
<line x1="224.25" y1="38" x2="224.25" y2="45" stroke="#5a5a5a" stroke-width=".5"/>
<text x="225.45" y="43.3" font-size="4.4" fill="#b0b0b0">340</text>
<line x1="240.50" y1="38" x2="240.50" y2="45" stroke="#5a5a5a" stroke-width=".5"/>
<text x="241.70" y="43.3" font-size="4.4" fill="#b0b0b0">320</text>
<line x1="256.75" y1="38" x2="256.75" y2="45" stroke="#5a5a5a" stroke-width=".5"/>
<text x="257.95" y="43.3" font-size="4.4" fill="#b0b0b0">300</text>
<line x1="273.00" y1="38" x2="273.00" y2="45" stroke="#5a5a5a" stroke-width=".5"/>
<text x="274.20" y="43.3" font-size="4.4" fill="#b0b0b0">280</text>
<line x1="289.25" y1="38" x2="289.25" y2="45" stroke="#5a5a5a" stroke-width=".5"/>
<text x="290.45" y="43.3" font-size="4.4" fill="#b0b0b0">260</text>
<line x1="305.50" y1="38" x2="305.50" y2="45" stroke="#5a5a5a" stroke-width=".5"/>
<text x="306.70" y="43.3" font-size="4.4" fill="#b0b0b0">240</text>
<line x1="321.75" y1="38" x2="321.75" y2="45" stroke="#5a5a5a" stroke-width=".5"/>
<text x="322.95" y="43.3" font-size="4.4" fill="#b0b0b0">220</text>
<line x1="338.00" y1="38" x2="338.00" y2="45" stroke="#5a5a5a" stroke-width=".5"/>
<text x="339.20" y="43.3" font-size="4.4" fill="#b0b0b0">200</text>
<line x1="354.25" y1="38" x2="354.25" y2="45" stroke="#5a5a5a" stroke-width=".5"/>
<text x="355.45" y="43.3" font-size="4.4" fill="#b0b0b0">180</text>
<line x1="370.50" y1="38" x2="370.50" y2="45" stroke="#5a5a5a" stroke-width=".5"/>
<text x="371.70" y="43.3" font-size="4.4" fill="#b0b0b0">160</text>
<line x1="386.75" y1="38" x2="386.75" y2="45" stroke="#5a5a5a" stroke-width=".5"/>
<text x="387.95" y="43.3" font-size="4.4" fill="#b0b0b0">140</text>
<line x1="403.00" y1="38" x2="403.00" y2="45" stroke="#5a5a5a" stroke-width=".5"/>
<text x="404.20" y="43.3" font-size="4.4" fill="#b0b0b0">120</text>
<line x1="419.25" y1="38" x2="419.25" y2="45" stroke="#5a5a5a" stroke-width=".5"/>
<text x="420.45" y="43.3" font-size="4.4" fill="#b0b0b0">100</text>
<line x1="435.50" y1="38" x2="435.50" y2="45" stroke="#5a5a5a" stroke-width=".5"/>
<text x="436.70" y="43.3" font-size="4.4" fill="#b0b0b0">80</text>
<line x1="451.75" y1="38" x2="451.75" y2="45" stroke="#5a5a5a" stroke-width=".5"/>
<text x="452.95" y="43.3" font-size="4.4" fill="#b0b0b0">60</text>
<line x1="468.00" y1="38" x2="468.00" y2="45" stroke="#5a5a5a" stroke-width=".5"/>
<text x="469.20" y="43.3" font-size="4.4" fill="#b0b0b0">40</text>
<line x1="484.25" y1="38" x2="484.25" y2="45" stroke="#5a5a5a" stroke-width=".5"/>
<text x="485.45" y="43.3" font-size="4.4" fill="#b0b0b0">20</text>
<line x1="500.50" y1="38" x2="500.50" y2="45" stroke="#5a5a5a" stroke-width=".5"/>
<text x="501.70" y="43.3" font-size="4.4" fill="#b0b0b0">0</text>
<line x1="516.75" y1="38" x2="516.75" y2="45" stroke="#5a5a5a" stroke-width=".5"/>
<text x="517.95" y="43.3" font-size="4.4" fill="#b0b0b0">20</text>
<line x1="533.00" y1="38" x2="533.00" y2="45" stroke="#5a5a5a" stroke-width=".5"/>
<text x="534.20" y="43.3" font-size="4.4" fill="#b0b0b0">40</text>
<line x1="549.25" y1="38" x2="549.25" y2="45" stroke="#5a5a5a" stroke-width=".5"/>
<text x="550.45" y="43.3" font-size="4.4" fill="#b0b0b0">60</text>
<line x1="565.50" y1="38" x2="565.50" y2="45" stroke="#5a5a5a" stroke-width=".5"/>
<text x="566.70" y="43.3" font-size="4.4" fill="#b0b0b0">80</text>
<line x1="581.75" y1="38" x2="581.75" y2="45" stroke="#5a5a5a" stroke-width=".5"/>
<text x="582.95" y="43.3" font-size="4.4" fill="#b0b0b0">100</text>
<line x1="598.00" y1="38" x2="598.00" y2="45" stroke="#5a5a5a" stroke-width=".5"/>
<text x="599.20" y="43.3" font-size="4.4" fill="#b0b0b0">120</text>
<line x1="614.25" y1="38" x2="614.25" y2="45" stroke="#5a5a5a" stroke-width=".5"/>
<text x="615.45" y="43.3" font-size="4.4" fill="#b0b0b0">140</text>
<line x1="630.50" y1="38" x2="630.50" y2="45" stroke="#5a5a5a" stroke-width=".5"/>
<text x="631.70" y="43.3" font-size="4.4" fill="#b0b0b0">160</text>
<line x1="646.75" y1="38" x2="646.75" y2="45" stroke="#5a5a5a" stroke-width=".5"/>
<text x="647.95" y="43.3" font-size="4.4" fill="#b0b0b0">180</text>
<line x1="663.00" y1="38" x2="663.00" y2="45" stroke="#5a5a5a" stroke-width=".5"/>
<text x="664.20" y="43.3" font-size="4.4" fill="#b0b0b0">200</text>
<line x1="679.25" y1="38" x2="679.25" y2="45" stroke="#5a5a5a" stroke-width=".5"/>
<text x="680.45" y="43.3" font-size="4.4" fill="#b0b0b0">220</text>
<line x1="695.50" y1="38" x2="695.50" y2="45" stroke="#5a5a5a" stroke-width=".5"/>
<text x="696.70" y="43.3" font-size="4.4" fill="#b0b0b0">240</text>
<line x1="711.75" y1="38" x2="711.75" y2="45" stroke="#5a5a5a" stroke-width=".5"/>
<text x="712.95" y="43.3" font-size="4.4" fill="#b0b0b0">260</text>
<line x1="728.00" y1="38" x2="728.00" y2="45" stroke="#5a5a5a" stroke-width=".5"/>
<text x="729.20" y="43.3" font-size="4.4" fill="#b0b0b0">280</text>
<line x1="744.25" y1="38" x2="744.25" y2="45" stroke="#5a5a5a" stroke-width=".5"/>
<text x="745.45" y="43.3" font-size="4.4" fill="#b0b0b0">300</text>
<line x1="760.50" y1="38" x2="760.50" y2="45" stroke="#5a5a5a" stroke-width=".5"/>
<text x="761.70" y="43.3" font-size="4.4" fill="#b0b0b0">320</text>
<line x1="47" y1="45.60" x2="53" y2="45.60" stroke="#5a5a5a" stroke-width=".5"/>
<text x="50" y="49.90" font-size="4.9" fill="#bdbdbd" text-anchor="middle">3</text>
<text x="50" y="55.00" font-size="4.9" fill="#bdbdbd" text-anchor="middle">2</text>
<text x="50" y="60.10" font-size="4.9" fill="#bdbdbd" text-anchor="middle">0</text>
<line x1="47" y1="61.85" x2="53" y2="61.85" stroke="#5a5a5a" stroke-width=".5"/>
<text x="50" y="66.15" font-size="4.9" fill="#bdbdbd" text-anchor="middle">3</text>
<text x="50" y="71.25" font-size="4.9" fill="#bdbdbd" text-anchor="middle">0</text>
<text x="50" y="76.35" font-size="4.9" fill="#bdbdbd" text-anchor="middle">0</text>
<line x1="47" y1="78.10" x2="53" y2="78.10" stroke="#5a5a5a" stroke-width=".5"/>
<text x="50" y="82.40" font-size="4.9" fill="#bdbdbd" text-anchor="middle">2</text>
<text x="50" y="87.50" font-size="4.9" fill="#bdbdbd" text-anchor="middle">8</text>
<text x="50" y="92.60" font-size="4.9" fill="#bdbdbd" text-anchor="middle">0</text>
<line x1="47" y1="94.35" x2="53" y2="94.35" stroke="#5a5a5a" stroke-width=".5"/>
<text x="50" y="98.65" font-size="4.9" fill="#bdbdbd" text-anchor="middle">2</text>
<text x="50" y="103.75" font-size="4.9" fill="#bdbdbd" text-anchor="middle">6</text>
<text x="50" y="108.85" font-size="4.9" fill="#bdbdbd" text-anchor="middle">0</text>
<line x1="47" y1="110.60" x2="53" y2="110.60" stroke="#5a5a5a" stroke-width=".5"/>
<text x="50" y="114.90" font-size="4.9" fill="#bdbdbd" text-anchor="middle">2</text>
<text x="50" y="120.00" font-size="4.9" fill="#bdbdbd" text-anchor="middle">4</text>
<text x="50" y="125.10" font-size="4.9" fill="#bdbdbd" text-anchor="middle">0</text>
<line x1="47" y1="126.85" x2="53" y2="126.85" stroke="#5a5a5a" stroke-width=".5"/>
<text x="50" y="131.15" font-size="4.9" fill="#bdbdbd" text-anchor="middle">2</text>
<text x="50" y="136.25" font-size="4.9" fill="#bdbdbd" text-anchor="middle">2</text>
<text x="50" y="141.35" font-size="4.9" fill="#bdbdbd" text-anchor="middle">0</text>
<line x1="47" y1="143.10" x2="53" y2="143.10" stroke="#5a5a5a" stroke-width=".5"/>
<text x="50" y="147.40" font-size="4.9" fill="#bdbdbd" text-anchor="middle">2</text>
<text x="50" y="152.50" font-size="4.9" fill="#bdbdbd" text-anchor="middle">0</text>
<text x="50" y="157.60" font-size="4.9" fill="#bdbdbd" text-anchor="middle">0</text>
<line x1="47" y1="159.35" x2="53" y2="159.35" stroke="#5a5a5a" stroke-width=".5"/>
<text x="50" y="163.65" font-size="4.9" fill="#bdbdbd" text-anchor="middle">1</text>
<text x="50" y="168.75" font-size="4.9" fill="#bdbdbd" text-anchor="middle">8</text>
<text x="50" y="173.85" font-size="4.9" fill="#bdbdbd" text-anchor="middle">0</text>
<line x1="47" y1="175.60" x2="53" y2="175.60" stroke="#5a5a5a" stroke-width=".5"/>
<text x="50" y="179.90" font-size="4.9" fill="#bdbdbd" text-anchor="middle">1</text>
<text x="50" y="185.00" font-size="4.9" fill="#bdbdbd" text-anchor="middle">6</text>
<text x="50" y="190.10" font-size="4.9" fill="#bdbdbd" text-anchor="middle">0</text>
<line x1="47" y1="191.85" x2="53" y2="191.85" stroke="#5a5a5a" stroke-width=".5"/>
<text x="50" y="196.15" font-size="4.9" fill="#bdbdbd" text-anchor="middle">1</text>
<text x="50" y="201.25" font-size="4.9" fill="#bdbdbd" text-anchor="middle">4</text>
<text x="50" y="206.35" font-size="4.9" fill="#bdbdbd" text-anchor="middle">0</text>
<line x1="47" y1="208.10" x2="53" y2="208.10" stroke="#5a5a5a" stroke-width=".5"/>
<text x="50" y="212.40" font-size="4.9" fill="#bdbdbd" text-anchor="middle">1</text>
<text x="50" y="217.50" font-size="4.9" fill="#bdbdbd" text-anchor="middle">2</text>
<text x="50" y="222.60" font-size="4.9" fill="#bdbdbd" text-anchor="middle">0</text>
<line x1="47" y1="224.35" x2="53" y2="224.35" stroke="#5a5a5a" stroke-width=".5"/>
<text x="50" y="228.65" font-size="4.9" fill="#bdbdbd" text-anchor="middle">1</text>
<text x="50" y="233.75" font-size="4.9" fill="#bdbdbd" text-anchor="middle">0</text>
<text x="50" y="238.85" font-size="4.9" fill="#bdbdbd" text-anchor="middle">0</text>
<line x1="47" y1="240.60" x2="53" y2="240.60" stroke="#5a5a5a" stroke-width=".5"/>
<text x="50" y="244.90" font-size="4.9" fill="#bdbdbd" text-anchor="middle">8</text>
<text x="50" y="250.00" font-size="4.9" fill="#bdbdbd" text-anchor="middle">0</text>
<line x1="47" y1="256.85" x2="53" y2="256.85" stroke="#5a5a5a" stroke-width=".5"/>
<text x="50" y="261.15" font-size="4.9" fill="#bdbdbd" text-anchor="middle">6</text>
<text x="50" y="266.25" font-size="4.9" fill="#bdbdbd" text-anchor="middle">0</text>
<line x1="47" y1="273.10" x2="53" y2="273.10" stroke="#5a5a5a" stroke-width=".5"/>
<text x="50" y="277.40" font-size="4.9" fill="#bdbdbd" text-anchor="middle">4</text>
<text x="50" y="282.50" font-size="4.9" fill="#bdbdbd" text-anchor="middle">0</text>
<line x1="47" y1="289.35" x2="53" y2="289.35" stroke="#5a5a5a" stroke-width=".5"/>
<text x="50" y="293.65" font-size="4.9" fill="#bdbdbd" text-anchor="middle">2</text>
<text x="50" y="298.75" font-size="4.9" fill="#bdbdbd" text-anchor="middle">0</text>
<line x1="47" y1="305.60" x2="53" y2="305.60" stroke="#5a5a5a" stroke-width=".5"/>
<text x="50" y="309.90" font-size="4.9" fill="#bdbdbd" text-anchor="middle">0</text>
<line x1="47" y1="321.85" x2="53" y2="321.85" stroke="#5a5a5a" stroke-width=".5"/>
<text x="50" y="326.15" font-size="4.9" fill="#bdbdbd" text-anchor="middle">2</text>
<text x="50" y="331.25" font-size="4.9" fill="#bdbdbd" text-anchor="middle">0</text>
<line x1="47" y1="338.10" x2="53" y2="338.10" stroke="#5a5a5a" stroke-width=".5"/>
<text x="50" y="342.40" font-size="4.9" fill="#bdbdbd" text-anchor="middle">4</text>
<text x="50" y="347.50" font-size="4.9" fill="#bdbdbd" text-anchor="middle">0</text>
<line x1="47" y1="354.35" x2="53" y2="354.35" stroke="#5a5a5a" stroke-width=".5"/>
<text x="50" y="358.65" font-size="4.9" fill="#bdbdbd" text-anchor="middle">6</text>
<text x="50" y="363.75" font-size="4.9" fill="#bdbdbd" text-anchor="middle">0</text>
<line x1="47" y1="370.60" x2="53" y2="370.60" stroke="#5a5a5a" stroke-width=".5"/>
<text x="50" y="374.90" font-size="4.9" fill="#bdbdbd" text-anchor="middle">8</text>
<text x="50" y="380.00" font-size="4.9" fill="#bdbdbd" text-anchor="middle">0</text>
<line x1="47" y1="386.85" x2="53" y2="386.85" stroke="#5a5a5a" stroke-width=".5"/>
<text x="50" y="391.15" font-size="4.9" fill="#bdbdbd" text-anchor="middle">1</text>
<text x="50" y="396.25" font-size="4.9" fill="#bdbdbd" text-anchor="middle">0</text>
<text x="50" y="401.35" font-size="4.9" fill="#bdbdbd" text-anchor="middle">0</text>
<line x1="47" y1="403.10" x2="53" y2="403.10" stroke="#5a5a5a" stroke-width=".5"/>
<text x="50" y="407.40" font-size="4.9" fill="#bdbdbd" text-anchor="middle">1</text>
<text x="50" y="412.50" font-size="4.9" fill="#bdbdbd" text-anchor="middle">2</text>
</svg>

<!-- ================= RIGHT ================= -->
<div id="vscroll" class="abs"></div>
<div class="abs" style="left:775px;top:19px;width:1px;height:410px;background:#383838"></div>
<div id="rpanel" class="abs"></div>
<div class="abs" style="left:776px;top:19px;width:31px;height:7px;background:#424242"></div>
<div id="rstrip" class="abs"></div>
<div class="abs" style="left:776px;top:19px;width:31px;height:410px"><svg width="31" height="410" viewBox="776 19 31 410">
  <path d="M800.2 21.6 L798.9 22.9 L800.2 24.2 M802.8 21.6 L801.5 22.9 L802.8 24.2" stroke="#d8d8d8" stroke-width=".9" fill="none"/>
  <!-- grips & separators -->
  <g fill="#474747">
    <rect x="782" y="29.4" width="12.6" height="1.6" rx=".8"/>
    <rect x="782" y="179" width="12.6" height="1.6" rx=".8"/>
    <rect x="782" y="205" width="12.6" height="1.6" rx=".8"/>
    <rect x="782" y="230.6" width="12.6" height="1.6" rx=".8"/>
    <rect x="782" y="380.4" width="12.6" height="1.6" rx=".8"/>
    <rect x="782" y="406.4" width="12.6" height="1.6" rx=".8"/>
  </g>
  <g fill="#3e3e3e">
    <rect x="776" y="175.8" width="25" height="1"/><rect x="776" y="201.8" width="25" height="1"/>
    <rect x="776" y="227.2" width="25" height="1"/><rect x="776" y="376.8" width="25" height="1"/>
    <rect x="776" y="403.4" width="25" height="1"/>
  </g>
  <!-- Character A| -->
  <text x="783.6" y="46.8" font-size="12.4" fill="#e0e0e0">A</text>
  <rect x="792.7" y="37.6" width=".9" height="10" fill="#e0e0e0"/>
  <!-- Paragraph -->
  <path d="M788.6 55.8 H792.6 V57 H791.8 V65.6 H790.6 V57 H789.6 V65.6 H788.4 V61.4 C783.8 61.4 783.8 55.8 788.6 55.8 Z" fill="#e0e0e0"/>
  <!-- OpenType O -->
  <text transform="translate(788.9,82.2) scale(.78,1)" style="font-family:'Liberation Serif',serif" font-style="italic" font-weight="bold" font-size="13.6" fill="#d0d0d0" text-anchor="middle">O</text>
  <g fill="none" stroke="#dcdcdc" stroke-width="1" stroke-linejoin="round" stroke-linecap="round">
    <!-- layers -->
    <path d="M788.7 90.2 L793.6 93.2 L788.7 96.2 L783.8 93.2 Z" fill="#dcdcdc"/>
    <path d="M783.8 96.4 L788.7 99.4 L793.6 96.4" stroke-width="1.3"/>
    <!-- libraries -->
    <path d="M787 107.4 L790.4 109 V112.6 L787 114.2 L783.8 112.6 V109 Z M783.8 109 L787 110.6 L790.4 109 M787 110.6 V114.2" stroke-width=".8"/>
    <rect x="791.6" y="107.2" width="2.4" height="2.4" fill="#dcdcdc" stroke="none"/>
    <rect x="791.6" y="111" width="2.4" height="2.4" fill="#dcdcdc" stroke="none"/>
    <rect x="783.6" y="115.4" width="10.6" height="2" fill="#dcdcdc" stroke="none"/>
    <!-- document / asset export -->
    <path d="M785.6 125.2 H793.6 V134.8 H785.6 Z" stroke-width=".9"/>
    <path d="M784 126.8 V136 H792" stroke-width=".7" stroke="#a0a0a0"/>
    <path d="M790 125.4 V130 L791.4 128.8 L792.8 130 V125.4 Z" fill="#dcdcdc" stroke-width=".4"/>
    <!-- stroke -->
    <path d="M783.6 144.6 H794 " stroke-width="1.8" stroke-linecap="butt"/>
    <path d="M783.6 148 H794 " stroke-width="1.4" stroke-linecap="butt"/>
    <path d="M783.6 151.2 H794 " stroke-width="1" stroke-linecap="butt"/>
    <!-- transparency -->
    <circle cx="787.4" cy="164" r="4.2" fill="#dcdcdc" stroke="none"/>
    <circle cx="790.4" cy="167.2" r="4.2" fill="#8a8a8a" stroke="#c4c4c4" stroke-width=".6"/>
    <!-- palette -->
    <path d="M783.4 192.6 C783 189.4 786.6 187.2 790 187.4 C793 187.6 794.6 189.4 794.2 191.6 C793.8 193.2 791.6 192.4 791 193.6 C790.6 194.8 791.4 195.8 789.4 196 C786 196.4 783.8 195 783.4 192.6 Z" fill="#dcdcdc" stroke-width=".5"/>
    <!-- gradient panel -->
    <path d="M784.4 211.4 V221.6 H794 C794 216 790 211.6 784.4 211.4 Z" fill="url(#gp)" stroke-width=".7"/>
    <!-- transform -->
    <rect x="785.4" y="239.8" width="7.2" height="7.2" stroke-width=".8" stroke-dasharray="1.2 1"/>
    <circle cx="789" cy="243.4" r=".8" fill="#dcdcdc" stroke="none"/>
    <!-- align -->
    <path d="M784.6 255.4 V265.8" stroke-width=".9"/>
    <rect x="786.2" y="257" width="4.4" height="2.8" fill="#dcdcdc" stroke="none"/>
    <rect x="786.2" y="261.6" width="7.6" height="2.8" fill="#dcdcdc" stroke="none"/>
    <!-- pathfinder -->
    <rect x="784.2" y="273.6" width="5.6" height="5.6" fill="#dcdcdc" stroke="none"/>
    <rect x="787.8" y="277.4" width="5.8" height="5.8" fill="#8e8e8e" stroke="#dcdcdc" stroke-width=".7"/>
    <!-- swatches -->
    <rect x="784" y="292.4" width="9.8" height="7.4" stroke-width=".8" fill="#8a8a8a"/>
    <path d="M784 296 H793.8 M787.3 292.4 V299.8 M790.6 292.4 V299.8" stroke-width=".6"/>
    <!-- brushes -->
    <path d="M785.6 313.6 H792 L791.4 319.2 H786.2 Z" fill="#dcdcdc" stroke-width=".5"/>
    <path d="M787 313 L786.2 309.4 M788.8 313 V307.8 M790.6 313 L792.4 309.8" stroke-width="1.1"/>
    <!-- symbols (club) -->
    <circle cx="788.8" cy="328.6" r="2.5" fill="#dcdcdc" stroke="none"/>
    <circle cx="786.2" cy="331.8" r="2.5" fill="#dcdcdc" stroke="none"/>
    <circle cx="791.4" cy="331.8" r="2.5" fill="#dcdcdc" stroke="none"/>
    <path d="M788.8 331 L787.4 336.2 H790.2 Z" fill="#dcdcdc" stroke-width=".4"/>
    <!-- actions play -->
    <path d="M785.4 345.2 L793 349 L785.4 352.8 Z" fill="#dcdcdc" stroke-width=".4"/>
    <!-- links -->
    <rect x="784" y="363.8" width="6.2" height="4.4" rx="2.2" stroke-width="1.2"/>
    <rect x="787.6" y="363.8" width="6.2" height="4.4" rx="2.2" stroke-width="1.2"/>
    <!-- appearance sun -->
    <circle cx="788.8" cy="393" r="3.3" fill="#dcdcdc" stroke="none"/>
    <circle cx="788.8" cy="393" r="4.9" stroke-width=".9" stroke-dasharray=".9 .9"/>
    <!-- artboards / copies -->
    <rect x="782.4" y="412.4" width="7.4" height="7.6" rx=".8" stroke-width=".9" stroke="#c4c4c4"/>
    <rect x="785.8" y="416.2" width="8.6" height="7.2" rx=".8" stroke-width=".9" stroke="#c4c4c4" fill="#535353"/>
  </g>
  <circle cx="786.2" cy="190.6" r=".8" fill="#535353"/><circle cx="789" cy="189.6" r=".8" fill="#535353"/><circle cx="791.8" cy="190.6" r=".8" fill="#535353"/><circle cx="786.4" cy="193.6" r=".9" fill="#535353"/>
  <defs><linearGradient id="gp" x1="0" x2="1"><stop offset="0" stop-color="#f0f0f0"/><stop offset="1" stop-color="#666"/></linearGradient></defs>
</svg>
</div>

<!-- ================= STATUS ================= -->
<div id="status" class="abs">
  <div class="abs" style="left:1.6px;top:1.2px;width:32.2px;height:8.8px;background:#454545"></div>
  <div class="abs" style="left:71.4px;top:1.2px;width:25.8px;height:8.8px;background:#454545"></div>
  <span style="left:3.9px;z-index:2">3,12%</span>
  <span style="left:73.4px;z-index:2">38</span>
  <span style="left:169.8px;color:#c4c4c4;font-size:6.2px">Прямое выделение</span>
</div>

<svg width="807" height="454" viewBox="0 0 807 454" style="pointer-events:none">
  <!-- Ai logo -->
  <rect x="6.4" y="4.4" width="10.4" height="9.6" rx=".8" fill="#2a0800" stroke="#c27a3e" stroke-width=".8"/>
  <text x="11.6" y="12" font-size="6.6" font-weight="bold" fill="#ff9d33" text-anchor="middle">Ai</text>
  <!-- home -->
  <path d="M30.9 4.9 L36.8 10.2 H35.2 V14.5 H32.4 V11.4 H29.4 V14.5 H26.6 V10.2 H25 Z" fill="#e4e4e4"/>
  <rect x="45.4" y="3" width="1" height="13" fill="#5f5f5f"/>
  <rect x="401.2" y="3" width="1" height="13" fill="#5f5f5f"/>
  <rect x="531.2" y="3" width="1" height="13" fill="#5f5f5f"/>
  <rect x="633.4" y="3" width="1" height="13" fill="#5f5f5f"/>
  <!-- arrange docs icon -->
  <g fill="#dadada"><rect x="409" y="6.2" width="4.6" height="5.8"/><rect x="414.4" y="6.2" width="4.6" height="2.5"/><rect x="414.4" y="9.5" width="4.6" height="2.5"/></g>
  <g fill="none" stroke="#e0e0e0" stroke-width="1.1" stroke-linecap="round" stroke-linejoin="round">
    <path d="M425.4 8.2 L427.4 10.2 L429.4 8.2"/>
    <path d="M621 8.4 L623 10.4 L625 8.4"/>
    <!-- touch workspace -->
    <rect x="440.6" y="5.8" width="11.8" height="7.8" stroke-width=".8" stroke="#cfcfcf"/>
    <!-- search -->
    <circle cx="648.4" cy="7.8" r="2.3" stroke-width=".9" stroke="#cfcfcf"/><path d="M646.6 9.6 L644.2 12" stroke-width="1.1" stroke="#cfcfcf"/>
    <!-- window buttons -->
    <path d="M758.4 7.6 H764.6" stroke-width="1.6" stroke-linecap="butt"/>
    <path d="M775.2 6.4 H780.4 V10.2 H775.2 Z M777 6.2 V4.6 H782.4 V8.4 H780.6" stroke-width=".9"/>
    <path d="M793.4 3.6 L798.8 9 M798.8 3.6 L793.4 9" stroke-width="1"/>
  </g>
  <path d="M445.4 12.6 V8.4 C445.4 7.4 446.8 7.4 446.8 8.4 V10.6 L449.4 11.2 C450 11.4 450.2 12 450 12.6 L449.6 14 H446.4 Z" fill="#e6e6e6" stroke="#535353" stroke-width=".4"/>
  <path d="M651.6 9.8 H654.6 L653.1 11.4 Z" fill="#cfcfcf"/>
  <path d="M752.8 0 V11.2 H807 M770.8 0 V11.2 M787.6 0 V11.2" stroke="#626262" stroke-width=".6" fill="none"/>
  <!-- vertical scrollbar -->
  <path d="M768 44 L770.2 41.8 L772.4 44" stroke="#c8c8c8" stroke-width="1" fill="none"/>
  <path d="M768 411.6 L770.2 413.8 L772.4 411.6" stroke="#c8c8c8" stroke-width="1" fill="none"/>
  <rect x="766.4" y="187.4" width="7.2" height="16" rx="3" fill="#6a6a6a"/>
  <!-- horizontal scrollbar -->
  <rect x="533.3" y="420" width="16.4" height="7.4" rx="3.6" fill="#666"/>
  <path d="M325.2 421.4 L323 423.6 L325.2 425.8" stroke="#c8c8c8" stroke-width="1" fill="none"/>
  <path d="M758.4 421.4 L760.6 423.6 L758.4 425.8" stroke="#c8c8c8" stroke-width="1" fill="none"/>
  <rect x="765" y="418" width="10" height="11" fill="#535353"/>
  <!-- status bar controls -->
      <g fill="none" stroke="#dcdcdc" stroke-width="1" stroke-linecap="round" stroke-linejoin="round">
    <path d="M84.4 423.4 L86.2 425.2 L88 423.4"/>
    <path d="M147 423.4 L148.8 425.2 L150.6 423.4"/>
  </g>
  <g fill="#dcdcdc">
    <rect x="97.6" y="421.4" width="1.1" height="5.6"/><path d="M103.4 421.4 V427 L99.4 424.2 Z"/>
    <path d="M113.4 421.4 V427 L109.4 424.2 Z"/>
    <path d="M161 421.4 V427 L165 424.2 Z"/>
    <path d="M171 421.4 V427 L175 424.2 Z"/><rect x="175.7" y="421.4" width="1.1" height="5.6"/>
    <path d="M312.2 421.4 V427 L316.2 424.2 Z"/>
  </g>
  <rect x="181.6" y="419" width=".8" height="10" fill="#3e3e3e"/>
  <rect x="318.4" y="419" width=".8" height="10" fill="#3e3e3e"/>
</svg>

<!-- ================= TASKBAR ================= -->
<div class="abs" style="left:0;top:428px;width:807px;height:26px"><svg width="807" height="26" viewBox="0 428 807 26">
  <defs>
    <linearGradient id="tbg" x1="0" x2="1"><stop offset="0" stop-color="#1d2025"/><stop offset=".62" stop-color="#221f20"/><stop offset=".8" stop-color="#1f2125"/><stop offset="1" stop-color="#1c2025"/></linearGradient>
  </defs>
  <rect x="0" y="428" width="807" height="26" fill="url(#tbg)"/>
  <!-- highlights -->
  <rect x="93.7" y="428.6" width="31.2" height="25.4" fill="#46484c"/>
  <rect x="315" y="428.6" width="30.7" height="25.4" fill="#6b5a4e"/>
  <!-- underlines -->
  <rect x="65" y="452" width="26" height="2" fill="#8ec8f0"/>
  <rect x="93.7" y="452" width="31.2" height="2" fill="#a6d4f6"/>
  <rect x="160" y="452" width="25.4" height="2" fill="#8ec8f0"/>
  <rect x="285.9" y="452" width="25.7" height="2" fill="#8ec8f0"/>
  <rect x="315" y="452" width="30.7" height="2" fill="#e8791c"/>
  <!-- windows logo -->
  <g fill="#f4f4f4">
    <path d="M9.9 437.4 L14.2 436.8 V440.8 H9.9 Z"/><path d="M14.8 436.7 L20.1 435.9 V440.8 H14.8 Z"/>
    <path d="M9.9 441.4 H14.2 V445.4 L9.9 444.8 Z"/><path d="M14.8 441.4 H20.1 V446.4 L14.8 445.5 Z"/>
  </g>
  <!-- task view -->
  <g fill="none" stroke="#d8d8d8" stroke-width="1">
    <rect x="42.2" y="438.4" width="5.6" height="5.6"/>
    <path d="M40 437 V445.4 M41 436.8 H48.6 M41 445.6 H48.6 M50.4 436.6 V438.4 M50.4 440 V445.6"/>
  </g>
  <!-- Photoshop -->
  <rect x="70.4" y="434.1" width="14.8" height="13.4" rx="2.4" fill="#001e2b" stroke="#31a8d9" stroke-width="1"/>
  <text x="77.8" y="444.2" font-size="8.4" font-weight="bold" fill="#bfe9ff" text-anchor="middle" textLength="9.4" lengthAdjust="spacingAndGlyphs">Ps</text>
  <!-- Illustrator -->
  <rect x="102.2" y="434.1" width="13.8" height="13.4" rx="1.2" fill="#2b0a00" stroke="#d8741e" stroke-width="1"/>
  <text x="109.1" y="444.2" font-size="8.6" font-weight="bold" fill="#ff9a2e" text-anchor="middle">Ai</text>
  <!-- Zoom -->
  <rect x="133.1" y="433.7" width="15.1" height="15.2" rx="5" fill="#3f8cf4"/>
  <rect x="136.4" y="439" width="5.8" height="4.6" rx="1" fill="#fff"/><path d="M142.8 440.8 L145.4 439.2 V443.4 L142.8 441.8 Z" fill="#fff"/>
  <!-- Explorer -->
  <path d="M165.8 436 H170.6 L171.8 437.4 H179 V447 H165.8 Z" fill="#e9b53a"/>
  <rect x="165.8" y="438.6" width="13.2" height="8.4" fill="#f7d467"/>
  <path d="M168.2 447.2 V442.6 H176.6 V447.2 H174.6 V444.4 H170.2 V447.2 Z" fill="#4b96d6"/>
  <rect x="168.2" y="441.2" width="8.4" height="1.6" fill="#2f6fb0"/>
  <!-- Skype -->
  <circle cx="202.6" cy="439.6" r="5.4" fill="#1aa3e6"/><circle cx="205.6" cy="443" r="5.4" fill="#1aa3e6"/><circle cx="204" cy="441.2" r="6.6" fill="#1ba6ea"/>
  <text x="204" y="444.6" font-size="9.4" font-weight="bold" fill="#fff" text-anchor="middle">S</text>
  <!-- WhatsApp -->
  <path d="M228.6 448.4 L229.8 444.4 A7 7 0 1 1 232.4 447.2 Z" fill="#fff"/>
  <circle cx="235.6" cy="441.2" r="6" fill="#3cc14f"/>
  <path d="M232.8 438.6 C233.4 437.6 234.2 438 234.4 438.6 L234.8 439.8 L234.2 440.6 C234.8 441.8 235.6 442.6 236.6 443 L237.4 442.4 L238.6 443 C239.2 443.4 239 444 238.4 444.4 C237 445.2 232 442.4 232.8 438.6 Z" fill="#fff"/>
  <!-- Telegram -->
  <circle cx="266.7" cy="441.2" r="7.1" fill="#2b9fd8"/>
  <path d="M262.4 441.2 L271 437.8 L269.6 445 L267 443.2 L265.6 444.6 L265.4 442.6 L269.4 439.2 L264.6 442 Z" fill="#fff"/>
  <!-- Chrome -->
  <circle cx="298.6" cy="441.2" r="7.1" fill="#e8453c"/>
  <path d="M298.6 441.2 L292.45 437.65 A7.1 7.1 0 0 0 298.6 448.3 L301.9 442.6 Z" fill="#36a852"/>
  <path d="M298.6 441.2 L304.75 437.65 A7.1 7.1 0 0 1 298.6 448.3 L302.15 442.1 Z" fill="#f9bb2d"/>
  <path d="M298.6 434.1 A7.1 7.1 0 0 1 304.75 437.65 H298.6 Z" fill="#e8453c"/>
  <circle cx="298.6" cy="441.2" r="3.3" fill="#fff"/><circle cx="298.6" cy="441.2" r="2.6" fill="#4a8af4"/>
  <!-- Telegram 2 with badge -->
  <circle cx="329.3" cy="441" r="7" fill="#2b9fd8"/>
  <path d="M325 441 L333.6 437.6 L332.2 444.8 L329.6 443 L328.2 444.4 L328 442.4 L332 439 L327.2 441.8 Z" fill="#fff"/>
  <rect x="329.6" y="444" width="9.4" height="5.6" rx=".8" fill="#e8262d"/>
  <text x="334.3" y="448.6" font-size="4.8" font-weight="bold" fill="#fff" text-anchor="middle">165</text>
  <!-- tray -->
  <g fill="none" stroke="#e6e6e6" stroke-width="1" stroke-linecap="round" stroke-linejoin="round">
    <path d="M545.8 443 L549 439.8 L552.2 443"/>
    <!-- meet now -->
    <rect x="586.6" y="438.2" width="4.6" height="6" rx="1" stroke-width=".8"/><path d="M591.4 440.2 L593.2 439.2 V443.2 L591.4 442.2 M587.4 436.4 C588.4 435.6 589.6 435.6 590.6 436.4 M587.4 446 C588.4 446.8 589.6 446.8 590.6 446" stroke-width=".7"/>
    <!-- screen/project -->
    <rect x="604.6" y="437" width="10" height="7.4" stroke-width=".9"/><path d="M606.4 440 L608 438.8 V441.2 Z M608.4 442.6 L610.4 440.6" stroke-width=".6"/>
    <!-- wifi -->
    <path d="M646.2 446.4 A4.6 4.6 0 0 1 650.8 441.8 M646.2 443.6 A7.4 7.4 0 0 1 653.6 436.2 M646.2 445 A6 6 0 0 1 652.2 439" stroke-width=".8" stroke="#bdbdbd"/>
    <!-- volume -->
    <path d="M666.4 439.8 H668 L670.2 437.8 V445 L668 443 H666.4 Z" stroke-width=".8"/>
    <path d="M671.6 439.8 C672.4 440.8 672.4 442 671.6 443 M673 438.4 C674.6 440.2 674.6 442.6 673 444.4" stroke-width=".8"/>
    <!-- link / pen -->
    <path d="M690.6 444.6 L692.6 442.6 M693.4 441.6 L695.2 439.8" stroke-width="2.2" stroke="#d0d0d0"/>
    <circle cx="689.8" cy="445.2" r="1.2" stroke-width=".8"/><circle cx="695.8" cy="438.8" r="1.2" stroke-width=".8"/>
  </g>
  <!-- cloud -->
  <path d="M563.6 445.2 C561.6 445.2 561.4 442.6 563.4 442.2 C563.6 440 566.4 439.2 567.6 440.8 C568.8 438.6 572.4 439.2 572.6 441.8 C575 441.8 575 445.2 572.8 445.2 Z" fill="#eaeaea"/>
  <circle cx="612.4" cy="445" r="1.8" fill="#2f7fe0"/>
  <!-- battery -->
  <rect x="625" y="438.2" width="10.4" height="6" rx=".8" fill="#f2f2f2"/><rect x="635.6" y="440" width="1" height="2.4" fill="#f2f2f2"/>
  <!-- notifications -->
  <path d="M780.8 435.8 H791 V443.4 H785 L782.8 445.4 V443.4 H780.8 Z" fill="#f2f2f2"/>
  <path d="M782.6 438 H789.2 M782.6 439.8 H789.2 M782.6 441.6 H787" stroke="#1e2126" stroke-width=".6"/>
  <circle cx="790.3" cy="446.4" r="3.8" fill="#1e2126" stroke="#e6e6e6" stroke-width=".7"/>
  <text x="790.3" y="448.7" font-size="6.2" font-weight="bold" fill="#fff" text-anchor="middle">2</text>
</svg>
</div>
<div id="taskbar" class="abs" style="background:none">
  <span class="tt" style="left:710px;top:8.3px;font-size:7.2px;line-height:8px;letter-spacing:-.5px">РУС</span>
  <span class="tt" style="left:741.6px;top:2.7px;font-size:7.25px;line-height:8px">14:57</span>
  <span class="tt" style="left:732.4px;top:14.6px;font-size:7.25px;line-height:8px">27.04.2022</span>
</div>

</div>
</body>
</html>
